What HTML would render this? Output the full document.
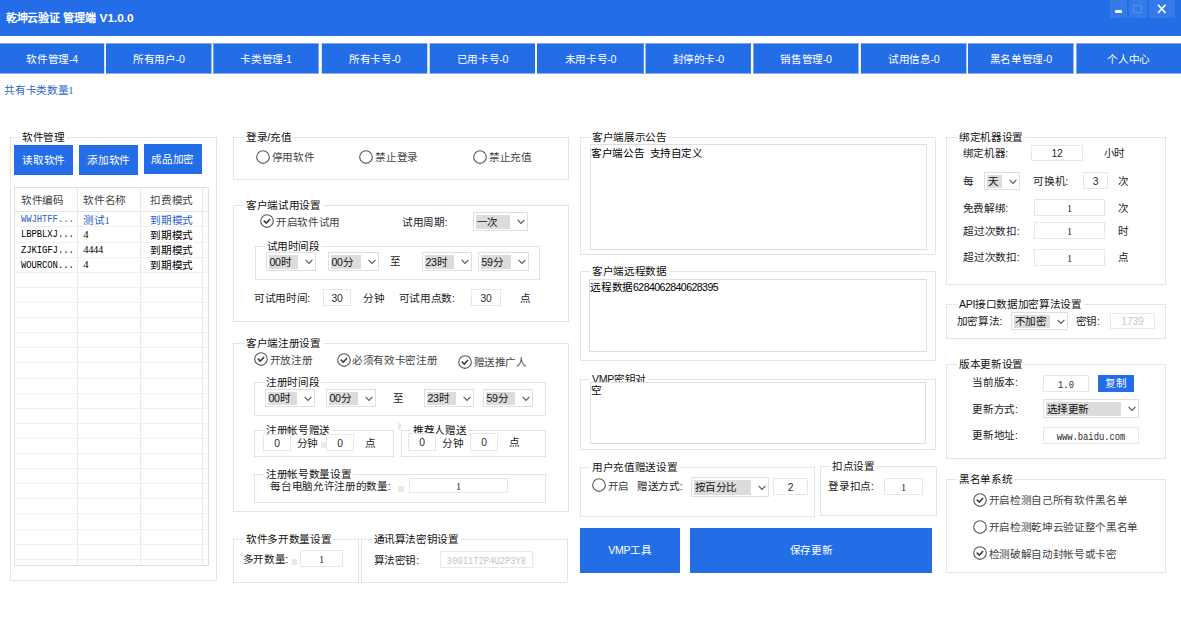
<!DOCTYPE html>
<html lang="zh-CN"><head><meta charset="utf-8"><title>UI</title><style>
html,body{margin:0;padding:0;background:#fff;}
body{width:1181px;height:619px;position:relative;overflow:hidden;font-family:"Liberation Sans",sans-serif;font-size:10.6px;letter-spacing:-0.34px;color:#222;}
div,svg{position:absolute;box-sizing:border-box;}
.t,.s,.m,.lg{white-space:nowrap;height:16px;line-height:16px;}
.m{font-family:"Liberation Mono",monospace;font-size:8.9px;letter-spacing:-0.04px;}
.j{display:inline-block;position:static;text-align:justify;text-align-last:justify;text-justify:inter-character;white-space:nowrap;vertical-align:top;}
.d{font-family:"Liberation Sans",sans-serif;letter-spacing:-0.58px;}
.m{transform:scaleY(1.18);}
.mm{display:inline-block;position:static;font-family:"Liberation Mono",monospace;font-size:8.9px;letter-spacing:-0.04px;transform:scaleY(1.18);}
.s{word-spacing:2.6px;}
.s,.s2{font-family:"Liberation Serif",serif;}
.lg{background:#fff;padding:0 2px;margin-left:-2px;color:#111;}
.g{border:1px solid #e4e4e4;}
.in{border:1px solid #e7e7e7;background:#fff;text-align:center;color:#2a2a2a;font-size:10.3px;letter-spacing:-0.2px;white-space:nowrap;overflow:hidden;}
.ta{border:1px solid #dedede;background:#fff;}
.cb{border:1px solid #dfdfdf;background:#fff;}
.hl{left:1.5px;top:1.5px;background:#dcdcdc;color:#111;white-space:nowrap;overflow:hidden;text-indent:0.5px;}
.ar{right:2px;}
.bt{background:#236ee6;color:#fff;text-align:center;white-space:nowrap;}
.tab{background:#236ee6;color:#fff;text-align:center;white-space:nowrap;}
.ttl{word-spacing:1.4px;color:#fff;font-weight:bold;font-size:11px;height:16px;line-height:16px;white-space:nowrap;}
</style></head><body>
<div class="a" style="left:0px;top:0px;width:1181px;height:36px;background:#236ee6"></div>
<div class="a ttl" style="left:6px;top:10px;"><span class="j" style="width:127.62px;">乾坤云验证 管理端 <span style="font-size:11.8px;letter-spacing:0">V1.0.0</span></span></div>
<div class="a" style="left:1109.5px;top:0px;width:17.8px;height:17.7px;background:#357be8"></div>
<div class="a" style="left:1129px;top:0px;width:17.7px;height:17.7px;background:#357be8"></div>
<div class="a" style="left:1148.7px;top:0px;width:26.3px;height:17.7px;background:#357be8"></div>
<div class="a" style="left:1115px;top:9.8px;width:7px;height:2.8px;background:#fff;border-radius:1px"></div>
<div class="a" style="left:1133.2px;top:4.7px;width:8.4px;height:8px;border:1px solid #4f8eec"></div>
<svg class="a" style="left:1156px;top:3px" width="12" height="12" viewBox="0 0 12 12"><path d="M2 1.8 L9.5 10 M9.5 1.8 L2 10" stroke="#fff" stroke-width="1.7" fill="none"/></svg>
<div class="a" style="left:0;top:43px;width:1181px;height:31px;background:linear-gradient(to bottom,#7ba8f0 0,#7ba8f0 1px,#236ee6 1px,#236ee6 30px,#86aff1 30px,#86aff1 31px)"></div>
<div class="a" style="left:104px;top:43px;width:1px;height:31px;background:#d3e2fa"></div>
<div class="a" style="left:105px;top:43px;width:1px;height:31px;background:#ffffff"></div>
<div class="a" style="left:211px;top:43px;width:1px;height:31px;background:#91b6f2"></div>
<div class="a" style="left:212px;top:43px;width:1px;height:31px;background:#ffffff"></div>
<div class="a" style="left:213px;top:43px;width:1px;height:31px;background:#659aee"></div>
<div class="a" style="left:318px;top:43px;width:1px;height:31px;background:#7ba8f0"></div>
<div class="a" style="left:319px;top:43px;width:1px;height:31px;background:#ffffff"></div>
<div class="a" style="left:320px;top:43px;width:1px;height:31px;background:#ffffff"></div>
<div class="a" style="left:321px;top:43px;width:1px;height:31px;background:#d3e2fa"></div>
<div class="a" style="left:427px;top:43px;width:1px;height:31px;background:#bdd3f7"></div>
<div class="a" style="left:428px;top:43px;width:1px;height:31px;background:#ffffff"></div>
<div class="a" style="left:429px;top:43px;width:1px;height:31px;background:#bdd3f7"></div>
<div class="a" style="left:535px;top:43px;width:1px;height:31px;background:#ffffff"></div>
<div class="a" style="left:536px;top:43px;width:1px;height:31px;background:#ffffff"></div>
<div class="a" style="left:643px;top:43px;width:1px;height:31px;background:#4f8beb"></div>
<div class="a" style="left:644px;top:43px;width:1px;height:31px;background:#ffffff"></div>
<div class="a" style="left:645px;top:43px;width:1px;height:31px;background:#91b6f2"></div>
<div class="a" style="left:750px;top:43px;width:1px;height:31px;background:#397de9"></div>
<div class="a" style="left:751px;top:43px;width:1px;height:31px;background:#ffffff"></div>
<div class="a" style="left:752px;top:43px;width:1px;height:31px;background:#ffffff"></div>
<div class="a" style="left:753px;top:43px;width:1px;height:31px;background:#7ba8f0"></div>
<div class="a" style="left:858px;top:43px;width:1px;height:31px;background:#91b6f2"></div>
<div class="a" style="left:859px;top:43px;width:1px;height:31px;background:#ffffff"></div>
<div class="a" style="left:860px;top:43px;width:1px;height:31px;background:#e9f0fc"></div>
<div class="a" style="left:966px;top:43px;width:1px;height:31px;background:#a7c5f5"></div>
<div class="a" style="left:967px;top:43px;width:1px;height:31px;background:#ffffff"></div>
<div class="a" style="left:1073px;top:43px;width:1px;height:31px;background:#91b6f2"></div>
<div class="a" style="left:1074px;top:43px;width:1px;height:31px;background:#ffffff"></div>
<div class="a" style="left:1075px;top:43px;width:1px;height:31px;background:#ffffff"></div>
<div class="a" style="left:1076px;top:43px;width:1px;height:31px;background:#7ba8f0"></div>
<div class="tab" style="left:0.00px;top:43.5px;width:104.20px;height:30px;line-height:30px;background:none"><span class="j" style="width:51.39px;">软件管理-4</span></div>
<div class="tab" style="left:106.00px;top:43.5px;width:105.50px;height:30px;line-height:30px;background:none"><span class="j" style="width:51.39px;">所有用户-0</span></div>
<div class="tab" style="left:213.30px;top:43.5px;width:105.30px;height:30px;line-height:30px;background:none"><span class="j" style="width:51.39px;">卡类管理-1</span></div>
<div class="tab" style="left:321.80px;top:43.5px;width:105.50px;height:30px;line-height:30px;background:none"><span class="j" style="width:51.39px;">所有卡号-0</span></div>
<div class="tab" style="left:429.70px;top:43.5px;width:105.30px;height:30px;line-height:30px;background:none"><span class="j" style="width:51.39px;">已用卡号-0</span></div>
<div class="tab" style="left:537.00px;top:43.5px;width:106.80px;height:30px;line-height:30px;background:none"><span class="j" style="width:51.39px;">未用卡号-0</span></div>
<div class="tab" style="left:645.50px;top:43.5px;width:105.40px;height:30px;line-height:30px;background:none"><span class="j" style="width:51.39px;">封停的卡-0</span></div>
<div class="tab" style="left:753.40px;top:43.5px;width:105.10px;height:30px;line-height:30px;background:none"><span class="j" style="width:51.39px;">销售管理-0</span></div>
<div class="tab" style="left:860.90px;top:43.5px;width:105.50px;height:30px;line-height:30px;background:none"><span class="j" style="width:51.39px;">试用信息-0</span></div>
<div class="tab" style="left:968.00px;top:43.5px;width:105.50px;height:30px;line-height:30px;background:none"><span class="j" style="width:62.05px;">黑名单管理-0</span></div>
<div class="tab" style="left:1076.40px;top:43.5px;width:104.60px;height:30px;line-height:30px;background:none"><span class="j" style="width:42.64px;">个人中心</span></div>
<div class="t" style="left:4.3px;top:82px;color:#2a68c8"><span class="j" style="width:68.94px;">共有卡类数量<span style="font-family:'Liberation Serif',serif">1</span></span></div>
<div class="g" style="left:10px;top:137px;width:207px;height:444px;"></div>
<div class="lg" style="left:22px;top:129.0px;"><span class="j" style="width:42.64px;">软件管理</span></div>
<div class="bt" style="left:14px;top:145px;width:59px;height:30px;line-height:30px;"><span class="j" style="width:42.64px;">读取软件</span></div>
<div class="bt" style="left:79px;top:145px;width:59px;height:30px;line-height:30px;"><span class="j" style="width:42.64px;">添加软件</span></div>
<div class="bt" style="left:144px;top:144px;width:57.5px;height:30px;line-height:30px;"><span class="j" style="width:42.64px;">成品加密</span></div>
<div class="a" style="left:14px;top:187px;width:195px;height:379px;border:1px solid #e0e0e0"></div>
<div class="a" style="left:77px;top:188px;width:1px;height:376px;background:#e9e9e9"></div>
<div class="a" style="left:140px;top:188px;width:1px;height:376px;background:#e9e9e9"></div>
<div class="a" style="left:202px;top:188px;width:1px;height:376px;background:#e9e9e9"></div>
<div class="a" style="left:15px;top:211px;width:193px;height:1px;background:#e6e6e6"></div>
<div class="a" style="left:15px;top:226px;width:193px;height:1px;background:#f0f0f0"></div>
<div class="a" style="left:15px;top:242px;width:193px;height:1px;background:#f0f0f0"></div>
<div class="a" style="left:15px;top:257px;width:193px;height:1px;background:#f0f0f0"></div>
<div class="a" style="left:15px;top:272px;width:193px;height:1px;background:#f0f0f0"></div>
<div class="a" style="left:15px;top:287px;width:193px;height:1px;background:#f0f0f0"></div>
<div class="a" style="left:15px;top:302px;width:193px;height:1px;background:#f0f0f0"></div>
<div class="a" style="left:15px;top:317px;width:193px;height:1px;background:#f0f0f0"></div>
<div class="a" style="left:15px;top:332px;width:193px;height:1px;background:#f0f0f0"></div>
<div class="a" style="left:15px;top:347px;width:193px;height:1px;background:#f0f0f0"></div>
<div class="a" style="left:15px;top:362px;width:193px;height:1px;background:#f0f0f0"></div>
<div class="a" style="left:15px;top:378px;width:193px;height:1px;background:#f0f0f0"></div>
<div class="a" style="left:15px;top:393px;width:193px;height:1px;background:#f0f0f0"></div>
<div class="a" style="left:15px;top:408px;width:193px;height:1px;background:#f0f0f0"></div>
<div class="a" style="left:15px;top:423px;width:193px;height:1px;background:#f0f0f0"></div>
<div class="a" style="left:15px;top:438px;width:193px;height:1px;background:#f0f0f0"></div>
<div class="a" style="left:15px;top:453px;width:193px;height:1px;background:#f0f0f0"></div>
<div class="a" style="left:15px;top:468px;width:193px;height:1px;background:#f0f0f0"></div>
<div class="a" style="left:15px;top:483px;width:193px;height:1px;background:#f0f0f0"></div>
<div class="a" style="left:15px;top:498px;width:193px;height:1px;background:#f0f0f0"></div>
<div class="a" style="left:15px;top:513px;width:193px;height:1px;background:#f0f0f0"></div>
<div class="a" style="left:15px;top:529px;width:193px;height:1px;background:#f0f0f0"></div>
<div class="a" style="left:15px;top:544px;width:193px;height:1px;background:#f0f0f0"></div>
<div class="a" style="left:15px;top:559px;width:193px;height:1px;background:#f0f0f0"></div>
<div class="t" style="left:20.9px;top:192.2px;color:#444"><span class="j" style="width:42.64px;">软件编码</span></div>
<div class="t" style="left:83.2px;top:192.2px;color:#444"><span class="j" style="width:42.64px;">软件名称</span></div>
<div class="t" style="left:150.2px;top:192.2px;color:#444"><span class="j" style="width:42.64px;">扣费模式</span></div>
<div class="m" style="left:20.9px;top:212.29999999999998px;color:#2a62c9">WWJHTFF...</div>
<div class="t" style="left:83.2px;top:211.7px;color:#2a62c9"><span class="j" style="width:26.30px;">测试<span class="s2">1</span></span></div>
<div class="t" style="left:150.2px;top:211.7px;color:#2a62c9"><span class="j" style="width:42.64px;">到期模式</span></div>
<div class="m" style="left:20.9px;top:227.41px;color:#000">LBPBLXJ...</div>
<div class="s" style="left:83.2px;top:226.81px;color:#000">4</div>
<div class="t" style="left:150.2px;top:226.81px;color:#000"><span class="j" style="width:42.64px;">到期模式</span></div>
<div class="m" style="left:20.9px;top:242.51999999999998px;color:#000">ZJKIGFJ...</div>
<div class="s" style="left:83.2px;top:241.92px;color:#000">4444</div>
<div class="t" style="left:150.2px;top:241.92px;color:#000"><span class="j" style="width:42.64px;">到期模式</span></div>
<div class="m" style="left:20.9px;top:257.63px;color:#000">WOURCON...</div>
<div class="s" style="left:83.2px;top:257.03px;color:#000">4</div>
<div class="t" style="left:150.2px;top:257.03px;color:#000"><span class="j" style="width:42.64px;">到期模式</span></div>
<div class="g" style="left:233px;top:137px;width:336px;height:43px;"></div>
<div class="lg" style="left:246px;top:129.0px;"><span class="j" style="width:45.25px;">登录/充值</span></div>
<svg class="a" style="left:254.7px;top:148.6px" width="16" height="16" viewBox="0 0 16 16"><circle cx="8" cy="8" r="6.3" fill="#fff" stroke="#5a5a5a" stroke-width="1.15"/></svg>
<div class="t" style="left:271.7px;top:149px;color:#444"><span class="j" style="width:42.64px;">停用软件</span></div>
<svg class="a" style="left:358.2px;top:148.6px" width="16" height="16" viewBox="0 0 16 16"><circle cx="8" cy="8" r="6.3" fill="#fff" stroke="#5a5a5a" stroke-width="1.15"/></svg>
<div class="t" style="left:375.2px;top:149px;color:#444"><span class="j" style="width:42.64px;">禁止登录</span></div>
<svg class="a" style="left:472.1px;top:148.6px" width="16" height="16" viewBox="0 0 16 16"><circle cx="8" cy="8" r="6.3" fill="#fff" stroke="#5a5a5a" stroke-width="1.15"/></svg>
<div class="t" style="left:489.1px;top:149px;color:#444"><span class="j" style="width:42.64px;">禁止充值</span></div>
<div class="g" style="left:233px;top:205px;width:336px;height:117px;"></div>
<div class="lg" style="left:246px;top:196.5px;"><span class="j" style="width:74.62px;">客户端试用设置</span></div>
<svg class="a" style="left:259.1px;top:213px" width="16" height="16" viewBox="0 0 16 16"><circle cx="8" cy="8" r="6.3" fill="#fff" stroke="#5a5a5a" stroke-width="1.15"/><path d="M4.7 7.6 L7.3 10.1 L11.1 5.9" fill="none" stroke="#3a3a3a" stroke-width="1.5"/></svg>
<div class="t" style="left:276px;top:213.5px;color:#444"><span class="j" style="width:63.97px;">开启软件试用</span></div>
<div class="t" style="left:402px;top:213.7px;"><span class="j" style="width:45.25px;">试用周期:</span></div>
<div class="cb" style="left:473px;top:212px;width:55px;height:19px;"><div class="hl" style="width:34.5px;height:14px;line-height:14px;"><span class="j" style="width:21.83px;">一次</span></div><svg class="ar" style="top:6.3px" width="8" height="6" viewBox="0 0 8 6"><path d="M0.6 0.8 L4 4.4 L7.4 0.8" fill="none" stroke="#555" stroke-width="1.1"/></svg></div>
<div class="g" style="left:255px;top:246px;width:285px;height:34px;"></div>
<div class="lg" style="left:266.5px;top:238.0px;"><span class="j" style="width:53.31px;">试用时间段</span></div>
<div class="cb" style="left:266px;top:252px;width:50px;height:19px;"><div class="hl" style="width:29.5px;height:14px;line-height:14px;"><span class="j" style="width:22.27px;">00时</span></div><svg class="ar" style="top:6.3px" width="8" height="6" viewBox="0 0 8 6"><path d="M0.6 0.8 L4 4.4 L7.4 0.8" fill="none" stroke="#555" stroke-width="1.1"/></svg></div>
<div class="cb" style="left:328px;top:252px;width:51px;height:19px;"><div class="hl" style="width:30.5px;height:14px;line-height:14px;"><span class="j" style="width:22.27px;">00分</span></div><svg class="ar" style="top:6.3px" width="8" height="6" viewBox="0 0 8 6"><path d="M0.6 0.8 L4 4.4 L7.4 0.8" fill="none" stroke="#555" stroke-width="1.1"/></svg></div>
<div class="t" style="left:390px;top:253px;"><span class="j" style="width:10.67px;">至</span></div>
<div class="cb" style="left:422px;top:252px;width:50px;height:19px;"><div class="hl" style="width:29.5px;height:14px;line-height:14px;"><span class="j" style="width:22.27px;">23时</span></div><svg class="ar" style="top:6.3px" width="8" height="6" viewBox="0 0 8 6"><path d="M0.6 0.8 L4 4.4 L7.4 0.8" fill="none" stroke="#555" stroke-width="1.1"/></svg></div>
<div class="cb" style="left:478px;top:252px;width:51px;height:19px;"><div class="hl" style="width:30.5px;height:14px;line-height:14px;"><span class="j" style="width:22.27px;">59分</span></div><svg class="ar" style="top:6.3px" width="8" height="6" viewBox="0 0 8 6"><path d="M0.6 0.8 L4 4.4 L7.4 0.8" fill="none" stroke="#555" stroke-width="1.1"/></svg></div>
<div class="t" style="left:253.9px;top:290px;"><span class="j" style="width:55.91px;">可试用时间:</span></div>
<div class="in" style="left:323px;top:289px;width:28px;height:17px;line-height:17px;">30</div>
<div class="t" style="left:363px;top:290px;"><span class="j" style="width:21.33px;">分钟</span></div>
<div class="t" style="left:398.7px;top:290px;"><span class="j" style="width:55.91px;">可试用点数:</span></div>
<div class="in" style="left:471px;top:289px;width:30px;height:17px;line-height:17px;">30</div>
<div class="t" style="left:519.8px;top:290px;"><span class="j" style="width:10.67px;">点</span></div>
<div class="g" style="left:233px;top:343px;width:336px;height:169px;"></div>
<div class="lg" style="left:246px;top:334.5px;"><span class="j" style="width:74.62px;">客户端注册设置</span></div>
<svg class="a" style="left:253px;top:351px" width="16" height="16" viewBox="0 0 16 16"><circle cx="8" cy="8" r="6.3" fill="#fff" stroke="#5a5a5a" stroke-width="1.15"/><path d="M4.7 7.6 L7.3 10.1 L11.1 5.9" fill="none" stroke="#3a3a3a" stroke-width="1.5"/></svg>
<div class="t" style="left:269.7px;top:351.5px;color:#444"><span class="j" style="width:42.64px;">开放注册</span></div>
<svg class="a" style="left:335.7px;top:351.6px" width="16" height="16" viewBox="0 0 16 16"><circle cx="8" cy="8" r="6.3" fill="#fff" stroke="#5a5a5a" stroke-width="1.15"/><path d="M4.7 7.6 L7.3 10.1 L11.1 5.9" fill="none" stroke="#3a3a3a" stroke-width="1.5"/></svg>
<div class="t" style="left:352px;top:352px;color:#444"><span class="j" style="width:85.28px;">必须有效卡密注册</span></div>
<svg class="a" style="left:457px;top:353.8px" width="16" height="16" viewBox="0 0 16 16"><circle cx="8" cy="8" r="6.3" fill="#fff" stroke="#5a5a5a" stroke-width="1.15"/><path d="M4.7 7.6 L7.3 10.1 L11.1 5.9" fill="none" stroke="#3a3a3a" stroke-width="1.5"/></svg>
<div class="t" style="left:473.5px;top:354.3px;color:#444"><span class="j" style="width:53.31px;">赠送推广人</span></div>
<div class="g" style="left:254px;top:382px;width:292px;height:34px;"></div>
<div class="lg" style="left:266px;top:374.1px;"><span class="j" style="width:53.31px;">注册时间段</span></div>
<div class="cb" style="left:265px;top:389px;width:50px;height:18px;"><div class="hl" style="width:29.5px;height:13px;line-height:13px;"><span class="j" style="width:22.27px;">00时</span></div><svg class="ar" style="top:5.8px" width="8" height="6" viewBox="0 0 8 6"><path d="M0.6 0.8 L4 4.4 L7.4 0.8" fill="none" stroke="#555" stroke-width="1.1"/></svg></div>
<div class="cb" style="left:326px;top:389px;width:50px;height:18px;"><div class="hl" style="width:29.5px;height:13px;line-height:13px;"><span class="j" style="width:22.27px;">00分</span></div><svg class="ar" style="top:5.8px" width="8" height="6" viewBox="0 0 8 6"><path d="M0.6 0.8 L4 4.4 L7.4 0.8" fill="none" stroke="#555" stroke-width="1.1"/></svg></div>
<div class="t" style="left:393px;top:389.5px;"><span class="j" style="width:10.67px;">至</span></div>
<div class="cb" style="left:424px;top:389px;width:50px;height:18px;"><div class="hl" style="width:29.5px;height:13px;line-height:13px;"><span class="j" style="width:22.27px;">23时</span></div><svg class="ar" style="top:5.8px" width="8" height="6" viewBox="0 0 8 6"><path d="M0.6 0.8 L4 4.4 L7.4 0.8" fill="none" stroke="#555" stroke-width="1.1"/></svg></div>
<div class="cb" style="left:483px;top:389px;width:50px;height:18px;"><div class="hl" style="width:29.5px;height:13px;line-height:13px;"><span class="j" style="width:22.27px;">59分</span></div><svg class="ar" style="top:5.8px" width="8" height="6" viewBox="0 0 8 6"><path d="M0.6 0.8 L4 4.4 L7.4 0.8" fill="none" stroke="#555" stroke-width="1.1"/></svg></div>
<div class="g" style="left:254px;top:430px;width:140px;height:27px;"></div>
<div class="lg" style="left:266px;top:422.1px;"><span class="j" style="width:63.97px;">注册帐号赠送</span></div>
<div class="in" style="left:263px;top:434px;width:28px;height:17px;line-height:17px;">0</div>
<div class="t" style="left:296.8px;top:434.5px;"><span class="j" style="width:21.33px;">分钟</span></div>
<div class="a" style="left:320.5px;top:441.5px;width:6px;height:6px;background:#e9e9e9"></div>
<div class="in" style="left:326px;top:434px;width:28px;height:17px;line-height:17px;">0</div>
<div class="t" style="left:364.8px;top:434.5px;"><span class="j" style="width:10.67px;">点</span></div>
<div class="a" style="left:397.8px;top:423px;width:3px;height:6.5px;background:#e9e9e9"></div>
<div class="g" style="left:401px;top:430px;width:145px;height:27px;"></div>
<div class="lg" style="left:413px;top:422.1px;"><span class="j" style="width:53.31px;">推荐人赠送</span></div>
<div class="in" style="left:408px;top:433px;width:28px;height:18px;line-height:18px;">0</div>
<div class="t" style="left:442px;top:435px;"><span class="j" style="width:21.33px;">分钟</span></div>
<div class="in" style="left:470px;top:433px;width:28px;height:18px;line-height:18px;">0</div>
<div class="t" style="left:509px;top:434px;"><span class="j" style="width:10.67px;">点</span></div>
<div class="g" style="left:254px;top:474px;width:292px;height:29px;"></div>
<div class="lg" style="left:266px;top:465.7px;"><span class="j" style="width:85.28px;">注册帐号数量设置</span></div>
<div class="t" style="left:270.4px;top:478.2px;"><span class="j" style="width:119.88px;">每台电脑允许注册的数量:</span></div>
<div class="a" style="left:397.5px;top:485.5px;width:6px;height:6px;background:#e8e8e8"></div>
<div class="in s2" style="left:409px;top:478px;width:99px;height:15px;line-height:15px;">1</div>
<div class="g" style="left:233px;top:539px;width:126px;height:44px;"></div>
<div class="lg" style="left:246px;top:531.3px;"><span class="j" style="width:85.28px;">软件多开数量设置</span></div>
<div class="t" style="left:242.6px;top:551.2px;"><span class="j" style="width:45.25px;">多开数量:</span></div>
<div class="a" style="left:292px;top:558.5px;width:5px;height:6px;background:#e8e8e8"></div>
<div class="in s2" style="left:300px;top:550px;width:43px;height:17px;line-height:17px;">1</div>
<div class="g" style="left:361px;top:539px;width:207px;height:44px;"></div>
<div class="lg" style="left:373.5px;top:531.3px;"><span class="j" style="width:85.28px;">通讯算法密钥设置</span></div>
<div class="t" style="left:373.5px;top:551.5px;"><span class="j" style="width:45.25px;">算法密钥:</span></div>
<div class="in" style="left:440px;top:551px;width:93px;height:17px;line-height:17px;color:#c4c4c4;border-color:#e9e9e9"><span class="mm">309I1T2P4U2P3Y8</span></div>
<div class="g" style="left:580px;top:137px;width:356px;height:118px;"></div>
<div class="lg" style="left:592px;top:129.0px;"><span class="j" style="width:74.62px;">客户端展示公告</span></div>
<div class="ta" style="left:590px;top:144px;width:337px;height:106px;line-height:106px;"></div>
<div class="t" style="left:591px;top:144.5px;color:#000;word-spacing:2.6px"><span class="j" style="width:111.81px;">客户端公告 支持自定义</span></div>
<div class="g" style="left:580px;top:271px;width:356px;height:90px;"></div>
<div class="lg" style="left:592px;top:262.5px;"><span class="j" style="width:74.62px;">客户端远程数据</span></div>
<div class="ta" style="left:589px;top:279px;width:338px;height:73px;line-height:73px;"></div>
<div class="t" style="left:590.4px;top:278.7px;color:#000"><span class="j" style="width:127.64px;">远程数据<span class="d">6284062840628395</span></span></div>
<div class="g" style="left:580px;top:379px;width:356px;height:71px;"></div>
<div class="lg" style="left:592px;top:371.2px;"><span class="j" style="width:53.92px;">VMP密钥对</span></div>
<div class="ta" style="left:590px;top:382px;width:336px;height:62px;line-height:62px;"></div>
<div class="t" style="left:591px;top:382px;color:#000"><span class="j" style="width:10.67px;">空</span></div>
<div class="g" style="left:580px;top:467px;width:235px;height:50px;"></div>
<div class="lg" style="left:592px;top:459.1px;"><span class="j" style="width:85.28px;">用户充值赠送设置</span></div>
<svg class="a" style="left:590.9px;top:477.2px" width="16" height="16" viewBox="0 0 16 16"><circle cx="8" cy="8" r="6.3" fill="#fff" stroke="#5a5a5a" stroke-width="1.15"/></svg>
<div class="t" style="left:607.7px;top:477.5px;color:#444"><span class="j" style="width:21.33px;">开启</span></div>
<div class="t" style="left:637px;top:477.5px;"><span class="j" style="width:45.25px;">赠送方式:</span></div>
<div class="cb" style="left:691px;top:477px;width:78px;height:20px;"><div class="hl" style="width:57.5px;height:15px;line-height:15px;"><span class="j" style="width:43.14px;">按百分比</span></div><svg class="ar" style="top:6.8px" width="8" height="6" viewBox="0 0 8 6"><path d="M0.6 0.8 L4 4.4 L7.4 0.8" fill="none" stroke="#555" stroke-width="1.1"/></svg></div>
<div class="in" style="left:773px;top:478px;width:35px;height:17px;line-height:17px;">2</div>
<div class="g" style="left:820px;top:466px;width:117px;height:50px;"></div>
<div class="lg" style="left:832px;top:458.2px;"><span class="j" style="width:42.64px;">扣点设置</span></div>
<div class="t" style="left:828.3px;top:477.5px;"><span class="j" style="width:45.25px;">登录扣点:</span></div>
<div class="in s2" style="left:884px;top:478px;width:39px;height:17px;line-height:17px;">1</div>
<div class="bt" style="left:580px;top:528.3px;width:99.70000000000005px;height:44.80000000000007px;line-height:44.80000000000007px;"><span class="j" style="width:43.27px;">VMP工具</span></div>
<div class="bt" style="left:689.7px;top:528.3px;width:242.39999999999998px;height:44.80000000000007px;line-height:44.80000000000007px;"><span class="j" style="width:42.64px;">保存更新</span></div>
<div class="g" style="left:946px;top:137px;width:220px;height:148px;"></div>
<div class="lg" style="left:959px;top:129.0px;"><span class="j" style="width:63.97px;">绑定机器设置</span></div>
<div class="t" style="left:962.7px;top:145.4px;"><span class="j" style="width:45.25px;">绑定机器:</span></div>
<div class="in" style="left:1031px;top:145px;width:52px;height:16px;line-height:16px;">12</div>
<div class="t" style="left:1103.8px;top:145.4px;"><span class="j" style="width:21.33px;">小时</span></div>
<div class="t" style="left:963.4px;top:172.5px;"><span class="j" style="width:10.67px;">每</span></div>
<div class="cb" style="left:984px;top:172px;width:36px;height:18px;"><div class="hl" style="width:15.5px;height:13px;line-height:13px;"><span class="j" style="width:11.17px;">天</span></div><svg class="ar" style="top:5.8px" width="8" height="6" viewBox="0 0 8 6"><path d="M0.6 0.8 L4 4.4 L7.4 0.8" fill="none" stroke="#555" stroke-width="1.1"/></svg></div>
<div class="t" style="left:1033.2px;top:172.5px;"><span class="j" style="width:34.59px;">可换机:</span></div>
<div class="in" style="left:1083px;top:172px;width:25px;height:17px;line-height:17px;">3</div>
<div class="t" style="left:1117.5px;top:172.5px;"><span class="j" style="width:10.67px;">次</span></div>
<div class="t" style="left:962.7px;top:200px;"><span class="j" style="width:45.25px;">免费解绑:</span></div>
<div class="in s2" style="left:1034px;top:199px;width:71px;height:17px;line-height:17px;">1</div>
<div class="t" style="left:1117.5px;top:200px;"><span class="j" style="width:10.67px;">次</span></div>
<div class="t" style="left:963.4px;top:223px;"><span class="j" style="width:55.91px;">超过次数扣:</span></div>
<div class="in s2" style="left:1034px;top:222px;width:71px;height:17px;line-height:17px;">1</div>
<div class="t" style="left:1117.5px;top:223px;"><span class="j" style="width:10.67px;">时</span></div>
<div class="t" style="left:963.4px;top:249.39999999999998px;"><span class="j" style="width:55.91px;">超过次数扣:</span></div>
<div class="in s2" style="left:1034px;top:249px;width:71px;height:17px;line-height:17px;">1</div>
<div class="t" style="left:1117.5px;top:249.39999999999998px;"><span class="j" style="width:10.67px;">点</span></div>
<div class="g" style="left:946px;top:304px;width:220px;height:35px;"></div>
<div class="lg" style="left:959px;top:296.1px;"><span class="j" style="width:122.66px;">API接口数据加密算法设置</span></div>
<div class="t" style="left:956.7px;top:313px;"><span class="j" style="width:45.25px;">加密算法:</span></div>
<div class="cb" style="left:1011px;top:312px;width:57px;height:18px;"><div class="hl" style="width:36.5px;height:13px;line-height:13px;"><span class="j" style="width:32.48px;">不加密</span></div><svg class="ar" style="top:5.8px" width="8" height="6" viewBox="0 0 8 6"><path d="M0.6 0.8 L4 4.4 L7.4 0.8" fill="none" stroke="#555" stroke-width="1.1"/></svg></div>
<div class="t" style="left:1075.6px;top:313px;"><span class="j" style="width:23.94px;">密钥:</span></div>
<div class="in" style="left:1110px;top:313px;width:45px;height:16px;line-height:16px;color:#c8c8c8;border-color:#e9e9e9">1739</div>
<div class="g" style="left:946px;top:364px;width:220px;height:95px;"></div>
<div class="lg" style="left:959px;top:355.8px;"><span class="j" style="width:63.97px;">版本更新设置</span></div>
<div class="t" style="left:972.4px;top:373.6px;"><span class="j" style="width:45.25px;">当前版本:</span></div>
<div class="in" style="left:1043px;top:375px;width:46px;height:17px;line-height:17px;"><span class="mm">1.0</span></div>
<div class="bt" style="left:1098.1px;top:374.8px;width:35.600000000000136px;height:16.899999999999977px;line-height:16.899999999999977px;"><span class="j" style="width:21.33px;">复制</span></div>
<div class="t" style="left:972.4px;top:400.7px;"><span class="j" style="width:45.25px;">更新方式:</span></div>
<div class="cb" style="left:1043px;top:399px;width:96px;height:19px;"><div class="hl" style="width:75.5px;height:14px;line-height:14px;"><span class="j" style="width:43.14px;">选择更新</span></div><svg class="ar" style="top:6.3px" width="8" height="6" viewBox="0 0 8 6"><path d="M0.6 0.8 L4 4.4 L7.4 0.8" fill="none" stroke="#555" stroke-width="1.1"/></svg></div>
<div class="t" style="left:972.4px;top:427.4px;"><span class="j" style="width:45.25px;">更新地址:</span></div>
<div class="in" style="left:1043px;top:427px;width:96px;height:17px;line-height:17px;"><span class="mm">www.baidu.com</span></div>
<div class="g" style="left:946px;top:479px;width:220px;height:94px;"></div>
<div class="lg" style="left:959px;top:470.8px;"><span class="j" style="width:53.31px;">黑名单系统</span></div>
<svg class="a" style="left:971.8px;top:491.7px" width="16" height="16" viewBox="0 0 16 16"><circle cx="8" cy="8" r="6.3" fill="#fff" stroke="#5a5a5a" stroke-width="1.15"/><path d="M4.7 7.6 L7.3 10.1 L11.1 5.9" fill="none" stroke="#3a3a3a" stroke-width="1.5"/></svg>
<div class="t" style="left:988.6px;top:492px;color:#444"><span class="j" style="width:138.59px;">开启检测自己所有软件黑名单</span></div>
<svg class="a" style="left:971.8px;top:518.7px" width="16" height="16" viewBox="0 0 16 16"><circle cx="8" cy="8" r="6.3" fill="#fff" stroke="#5a5a5a" stroke-width="1.15"/></svg>
<div class="t" style="left:988.6px;top:519px;color:#444"><span class="j" style="width:149.25px;">开启检测乾坤云验证整个黑名单</span></div>
<svg class="a" style="left:971.8px;top:545.4px" width="16" height="16" viewBox="0 0 16 16"><circle cx="8" cy="8" r="6.3" fill="#fff" stroke="#5a5a5a" stroke-width="1.15"/><path d="M4.7 7.6 L7.3 10.1 L11.1 5.9" fill="none" stroke="#3a3a3a" stroke-width="1.5"/></svg>
<div class="t" style="left:988.6px;top:545.7px;color:#444"><span class="j" style="width:127.92px;">检测破解自动封帐号或卡密</span></div>
</body></html>
